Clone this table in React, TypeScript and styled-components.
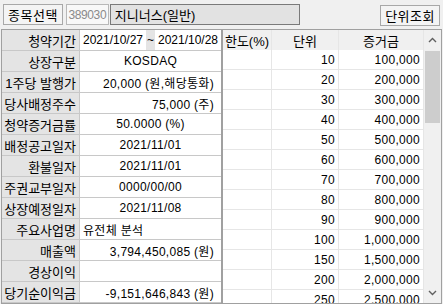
import styled, { createGlobalStyle } from "styled-components";

const GlobalStyle = createGlobalStyle`
  html, body {
    margin: 0;
    padding: 0;
    background: #f0f0f0;
  }
`;

type InfoRow = {
  label: string;
  value?: string;
  align?: "left" | "center" | "right";
};

const infoRows: InfoRow[] = [
  { label: "상장구분", value: "KOSDAQ", align: "center" },
  { label: "1주당 발행가", value: "20,000 (원,해당통화)", align: "right" },
  { label: "당사배정주수", value: "75,000 (주)", align: "right" },
  { label: "청약증거금률", value: "50.0000 (%)", align: "center" },
  { label: "배정공고일자", value: "2021/11/01", align: "center" },
  { label: "환불일자", value: "2021/11/01", align: "center" },
  { label: "주권교부일자", value: "0000/00/00", align: "center" },
  { label: "상장예정일자", value: "2021/11/08", align: "center" },
  { label: "주요사업명", value: "유전체 분석", align: "left" },
  { label: "매출액", value: "3,794,450,085 (원)", align: "right" },
  { label: "경상이익", value: "", align: "right" },
  { label: "당기순이익금", value: "-9,151,646,843 (원)", align: "right" },
];

const units = [10, 20, 30, 40, 50, 60, 70, 80, 90, 100, 150, 200, 250];

const fmt = (n: number) => n.toLocaleString("en-US");

const App: React.FC = () => {
  return (
    <>
      <GlobalStyle />
      <Screen>
        <TopBar>
          <Button>종목선택</Button>
          <CodeBox>389030</CodeBox>
          <NameBox>지니너스(일반)</NameBox>
          <Spacer />
          <Button $tall>단위조회</Button>
        </TopBar>
        <Body>
          <InfoPanel>
            <Label>청약기간</Label>
            <PeriodCell>
              <DateBox>2021/10/27</DateBox>
              <Tilde>~</Tilde>
              <DateBox>2021/10/28</DateBox>
            </PeriodCell>
            {infoRows.map((r) => (
              <Row key={r.label}>
                <Label>{r.label}</Label>
                <Value $align={r.align}>{r.value}</Value>
              </Row>
            ))}
          </InfoPanel>
          <UnitPanel>
            <Grid>
              <Head>한도(%)</Head>
              <Head>단위</Head>
              <Head>증거금</Head>
              {units.map((u) => (
                <Row key={u}>
                  <Cell />
                  <Cell>{u}</Cell>
                  <Cell>{fmt(u * 10000)}</Cell>
                </Row>
              ))}
            </Grid>
            <ScrollBar>
              <Arrow>
                <svg width="9" height="6" viewBox="0 0 9 6">
                  <path d="M1 5 L4.5 1.5 L8 5" stroke="#606060" strokeWidth="1.4" fill="none" />
                </svg>
              </Arrow>
              <Track>
                <Thumb />
              </Track>
              <Arrow>
                <svg width="9" height="6" viewBox="0 0 9 6">
                  <path d="M1 1 L4.5 4.5 L8 1" stroke="#606060" strokeWidth="1.4" fill="none" />
                </svg>
              </Arrow>
            </ScrollBar>
          </UnitPanel>
        </Body>
      </Screen>
    </>
  );
};

export default App;

const Screen = styled.div`
  width: 443px;
  height: 304px;
  overflow: hidden;
  background: #f0f0f0;
  font-family: "Liberation Sans", "Noto Sans CJK KR", sans-serif;
  font-size: 12px;
  color: #000;
  display: flex;
  flex-direction: column;
`;

const TopBar = styled.div`
  display: flex;
  align-items: flex-start;
  height: 29px;
  padding: 4px 3px 0 3px;
  box-sizing: border-box;
  gap: 3px;
`;

const Button = styled.div<{ $tall?: boolean }>`
  height: 21px;
  margin-top: ${(p) => (p.$tall ? "1px" : "0")};
  padding: 0 4px;
  box-sizing: border-box;
  display: flex;
  align-items: center;
  background: #f4f4f4;
  border: 1px solid #a8a8a8;
  font-size: 13px;
  letter-spacing: 0.5px;
`;

const CodeBox = styled.div`
  width: 43px;
  height: 21px;
  box-sizing: border-box;
  display: flex;
  align-items: center;
  justify-content: center;
  background: #f8f8f8;
  border: 1px solid #b8b8b8;
  color: #8a8a8a;
  font-size: 12px;
  letter-spacing: -0.4px;
`;

const NameBox = styled.div`
  width: 190px;
  height: 21px;
  margin-left: -2px;
  box-sizing: border-box;
  display: flex;
  align-items: center;
  padding-left: 4px;
  background: #e2e2e2;
  border: 1px solid #7a7a7a;
  font-size: 13px;
`;

const Spacer = styled.div`
  flex: 1;
`;

const Body = styled.div`
  display: flex;
  flex: 1;
  min-height: 0;
`;

const InfoPanel = styled.div`
  width: 222px;
  box-sizing: border-box;
  border: 1px solid #a0a0a0;
  border-right: 2px solid #a0a0a0;
  display: grid;
  grid-template-columns: 78px 1fr;
  grid-auto-rows: 20px;
  row-gap: 1px;
  background: #c8c8c8;
  align-content: start;
  margin-left: 1px;
`;

const Row = styled.div`
  display: contents;
`;

const Label = styled.div`
  background: #e4e4e4;
  display: flex;
  align-items: center;
  justify-content: flex-end;
  padding-right: 3px;
  font-size: 13px;
  border-right: 1px solid #c8c8c8;
  white-space: nowrap;
`;

const Value = styled.div<{ $align?: "left" | "center" | "right" }>`
  background: #fff;
  display: flex;
  align-items: center;
  justify-content: ${(p) =>
    p.$align === "left" ? "flex-start" : p.$align === "center" ? "center" : "flex-end"};
  padding: 0 ${(p) => (p.$align === "right" ? "7px" : "3px")} 0 3px;
  white-space: nowrap;
  font-size: 12px;
  letter-spacing: 0.3px;
`;

const PeriodCell = styled.div`
  display: flex;
  align-items: stretch;
  background: #e4e4e4;
`;

const DateBox = styled.div`
  width: 66px;
  background: #fff;
  display: flex;
  align-items: center;
  justify-content: center;
`;

const Tilde = styled.div`
  flex: 1;
  display: flex;
  align-items: center;
  justify-content: center;
`;

const UnitPanel = styled.div`
  flex: 1;
  display: flex;
  border: 1px solid #a0a0a0;
  border-left: none;
  margin-right: 1px;
  background: #fff;
  overflow: hidden;
`;

const Grid = styled.div`
  flex: 1;
  display: grid;
  grid-template-columns: 48px 66px 1fr;
  grid-auto-rows: 19px;
  row-gap: 1px;
  column-gap: 1px;
  background: #e6e6e6;
  align-content: start;
`;

const Head = styled.div`
  background: #f0f0f0;
  display: flex;
  align-items: center;
  justify-content: center;
  font-size: 13px;
  border-bottom: 1px solid #c8c8c8;
  margin-bottom: -1px;
  height: 20px;
`;

const Cell = styled.div`
  background: #fff;
  display: flex;
  align-items: center;
  justify-content: flex-end;
  padding-right: 3px;
  font-size: 12px;
  letter-spacing: 0.3px;
`;

const ScrollBar = styled.div`
  width: 17px;
  display: flex;
  flex-direction: column;
  background: #f0f0f0;
  border-left: 1px solid #e6e6e6;
`;

const Arrow = styled.div`
  height: 20px;
  display: flex;
  align-items: center;
  justify-content: center;
`;

const Track = styled.div`
  flex: 1;
  padding: 1px 1px;
`;

const Thumb = styled.div`
  height: 72px;
  background: #cdcdcd;
`;
